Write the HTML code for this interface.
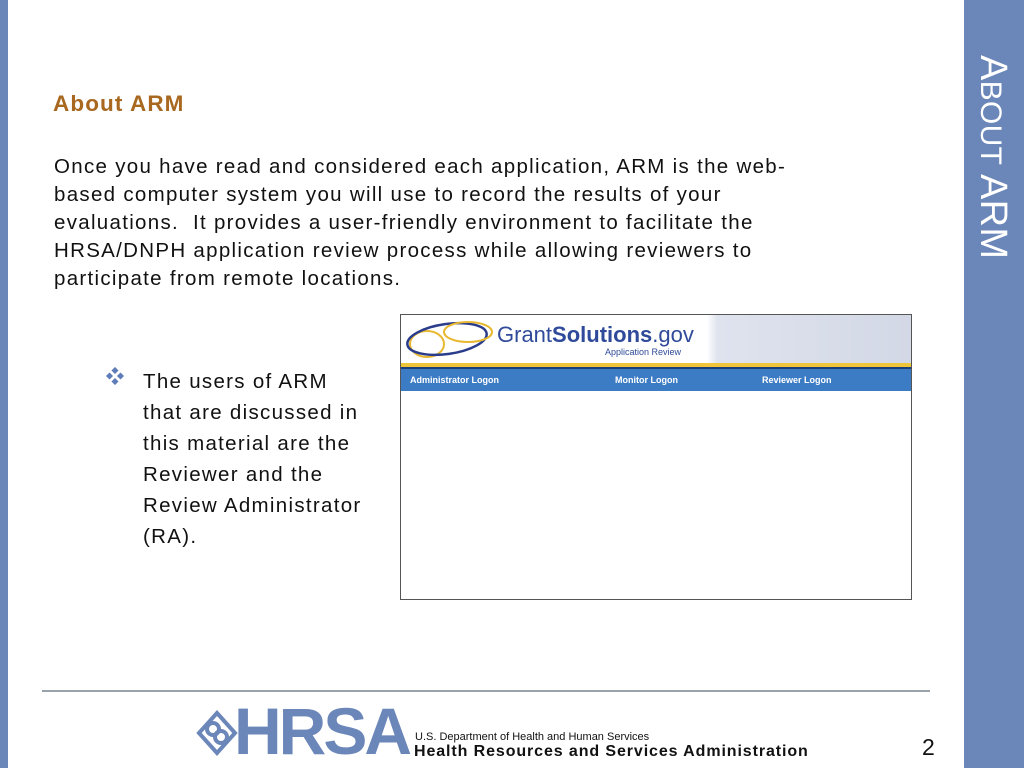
<!DOCTYPE html>
<html><head><style>
body{margin:0;width:1024px;height:768px;background:#fff;position:relative;overflow:hidden;font-family:"Liberation Sans",sans-serif}
.abs{position:absolute}
.t{white-space:nowrap;color:#111;font-size:20.5px;letter-spacing:1.3px}
</style></head><body>
<div class="abs" style="left:0;top:0;width:8px;height:768px;background:#6b86b8"></div>
<div class="abs" style="left:964px;top:0;width:60px;height:768px;background:#6b86b8"></div>
<div class="abs" style="left:1014px;top:55px;transform-origin:0 0;transform:rotate(90deg);color:#fff;font-size:38px;white-space:nowrap;letter-spacing:0.3px">A<span style="font-size:30px">BOUT</span> ARM</div>

<div class="abs" style="left:53px;top:91px;font-weight:bold;color:#a8681f;font-size:22.5px;letter-spacing:1.1px">About ARM</div>
<div class="abs t" style="left:54px;top:153px;line-height:28px">Once you have read and considered each application, ARM is the web-<br>based computer system you will use to record the results of your<br>evaluations.&nbsp; It provides a user-friendly environment to facilitate the<br>HRSA/DNPH application review process while allowing reviewers to<br>participate from remote locations.</div>

<svg class="abs" style="left:106px;top:367px" width="18" height="18" viewBox="0 0 18 18" fill="#5e7cb8"><rect x="6.5" y="1" width="5" height="5" transform="rotate(45 9 3.5)"/><rect x="6.5" y="12" width="5" height="5" transform="rotate(45 9 14.5)"/><rect x="1" y="6.5" width="5" height="5" transform="rotate(45 3.5 9)"/><rect x="12" y="6.5" width="5" height="5" transform="rotate(45 14.5 9)"/></svg>
<div class="abs t" style="left:143px;top:366px;line-height:31px;letter-spacing:1.3px">The users of ARM<br>that are discussed in<br>this material are the<br>Reviewer and the<br>Review Administrator<br>(RA).</div>

<div class="abs" style="left:400px;top:314px;width:510px;height:284px;border:1px solid #555;background:#fff">
 <div class="abs" style="left:0;top:0;width:510px;height:48px;background:linear-gradient(90deg,#fff 0,#fff 60%,#dfe3ee 62%,#d3d8e6 100%)"></div>
 <svg class="abs" style="left:4px;top:3px" width="90" height="44"><ellipse cx="22" cy="26" rx="17" ry="13" fill="none" stroke="#e8b830" stroke-width="2"/><ellipse cx="42" cy="21" rx="40" ry="15" fill="none" stroke="#2a3d8c" stroke-width="2.5" transform="rotate(-8 42 21)"/><ellipse cx="63" cy="14" rx="24" ry="10" fill="none" stroke="#e8b830" stroke-width="2"/></svg>
 <div class="abs" style="left:96px;top:7px;font-size:22px;color:#2f4a9a;white-space:nowrap">Grant<b>Solutions</b>.gov</div>
 <div class="abs" style="left:204px;top:32px;font-size:9px;color:#2f4a9a">Application Review</div>
 <div class="abs" style="left:0;top:48px;width:510px;height:4px;background:#f0c53a"></div>
 <div class="abs" style="left:0;top:52px;width:510px;height:2px;background:#1c3f78"></div>
 <div class="abs" style="left:0;top:54px;width:510px;height:22px;background:#3c7cc4;color:#fff;font-size:9px;font-weight:bold;text-decoration:underline">
  <span class="abs" style="left:9px;top:6px">Administrator Logon</span>
  <span class="abs" style="left:214px;top:6px">Monitor Logon</span>
  <span class="abs" style="left:361px;top:6px">Reviewer Logon</span>
 </div>
</div>

<div class="abs" style="left:42px;top:690px;width:888px;height:2px;background:#9aa3ab"></div>

<svg class="abs" style="left:196px;top:710px" width="42" height="46" viewBox="0 0 42 46"><g fill="none" stroke="#6b86b8" stroke-width="4"><path d="M21 3 L39 23 L21 43 L3 23 Z"/><circle cx="17" cy="19" r="6"/><circle cx="25" cy="27" r="6"/></g></svg>
<div class="abs" style="left:234px;top:698px;font-size:66px;font-weight:bold;color:#6b86b8;letter-spacing:-3px;line-height:66px">HRSA</div>
<div class="abs" style="left:415px;top:731px;font-size:11px;color:#111">U.S. Department of Health and Human Services</div>
<div class="abs" style="left:414px;top:743px;font-size:16px;font-weight:bold;color:#111;white-space:nowrap;letter-spacing:0.9px">Health Resources and Services Administration</div>
<div class="abs" style="left:922px;top:734px;font-size:23px;color:#111">2</div>
</body></html>
